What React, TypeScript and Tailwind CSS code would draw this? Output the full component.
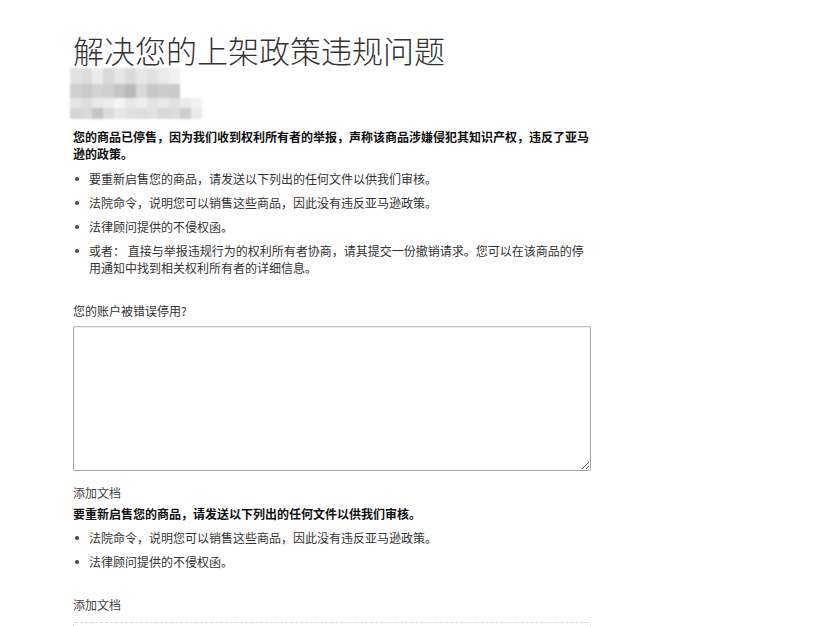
import React from "react";

// pixelated (redacted) block under the title
const mosaicRows: { h: number; cells: string[] }[] = [
  {
    h: 16,
    cells: ["#e2e2e2", "#dcdcdc", "#ececec", "#d9d9d9", "#e5e5e5", "#dadada", "#e7e7e7", "#e2e2e2", "#eaeaea", "#f1f1f1", "#ffffff", "#ffffff"],
  },
  {
    h: 14,
    cells: ["#d0d0d0", "#cacaca", "#d3d3d3", "#cfcfcf", "#c5c5c5", "#b8b9ba", "#dadada", "#c7c7c7", "#cbcbcb", "#c9c9c9", "#ffffff", "#ffffff"],
  },
  {
    h: 10,
    cells: ["#e5e5e5", "#dfdfdf", "#e8e8e8", "#ededed", "#f5f5f5", "#e9e9e9", "#eeeeee", "#e3e3e3", "#e9e9e9", "#e1e1e1", "#ececec", "#f2f2f2"],
  },
  {
    h: 11,
    cells: ["#d5d5d5", "#d9d9d9", "#c4c4c4", "#dbdbdb", "#e7e7e7", "#e1e1e1", "#dddddd", "#e1e1e1", "#d7d7d7", "#dbdbdb", "#cdcdcd", "#e9e9e9"],
  },
];

const Bullet = ({ children }: { children: React.ReactNode }) => (
  <li className="flex items-start leading-[17px]">
    <span className="mt-[7px] ml-[2px] mr-[10px] h-[4px] w-[4px] shrink-0 rounded-full bg-[#444]" />
    <span>{children}</span>
  </li>
);

const App: React.FC = () => {
  return (
    <div
      className="min-h-[626px] w-[838px] bg-white text-[12px] text-[#333]"
      style={{ fontFamily: '"Noto Sans CJK SC", "Noto Sans", sans-serif' }}
    >
      <div className="ml-[73px] w-[518px] pt-[32px]">
        <h1 className="whitespace-nowrap text-[31px] font-light leading-[36px] text-[#333]">
          解决您的上架政策违规问题
        </h1>

        {/* redacted block */}
        <div className="ml-[-3px] w-[134px] blur-[1.2px]">
          {mosaicRows.map((row, i) => (
            <div key={i} className="flex">
              {row.cells.map((c, j) => (
                <div key={j} className="w-[11px]" style={{ height: row.h, background: c }} />
              ))}
            </div>
          ))}
        </div>

        <p className="mt-[9px] font-bold leading-[17px] text-[#111]">
          您的商品已停售，因为我们收到权利所有者的举报，声称该商品涉嫌侵犯其知识产权，违反了亚马逊的政策。
        </p>

        <ul className="mt-[8px] space-y-[7px]">
          <Bullet>要重新启售您的商品，请发送以下列出的任何文件以供我们审核。</Bullet>
          <Bullet>法院命令，说明您可以销售这些商品，因此没有违反亚马逊政策。</Bullet>
          <Bullet>法律顾问提供的不侵权函。</Bullet>
          <Bullet>
            或者： 直接与举报违规行为的权利所有者协商，请其提交一份撤销请求。您可以在该商品的停用通知中找到相关权利所有者的详细信息。
          </Bullet>
        </ul>

        <label className="mt-[26px] block leading-[17px]">您的账户被错误停用?</label>
        <textarea className="mt-[7px] block h-[145px] w-[518px] rounded-[2px] border border-[#a6a6a6] border-t-[#c4c4c4] bg-white shadow-[inset_0_1px_0_rgba(0,0,0,0.07)] outline-none" />

        <div className="mt-[13px] leading-[17px] text-[#444]">添加文档</div>
        <p className="mt-[4px] font-bold leading-[17px] text-[#111]">
          要重新启售您的商品，请发送以下列出的任何文件以供我们审核。
        </p>
        <ul className="mt-[7px] space-y-[7px]">
          <Bullet>法院命令，说明您可以销售这些商品，因此没有违反亚马逊政策。</Bullet>
          <Bullet>法律顾问提供的不侵权函。</Bullet>
        </ul>

        <div className="mt-[26px] leading-[17px] text-[#444]">添加文档</div>
        <div className="mt-[9px] h-[60px] w-[518px] rounded-[2px] border border-dashed border-[#d5d5d5]" />
      </div>
    </div>
  );
};

export default App;
